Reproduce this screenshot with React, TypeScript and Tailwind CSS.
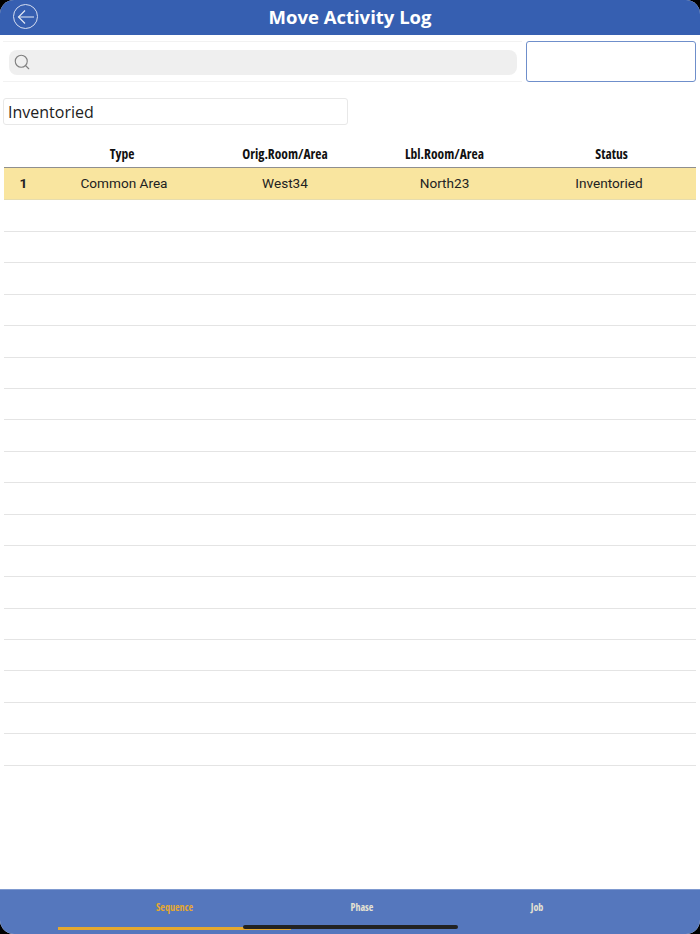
import { Search } from 'lucide-react';

const COLS = 'grid grid-cols-[39px_162px_160px_159px_172px] items-center text-center';

export default function App() {
  return (
    <div className="relative flex h-[934px] w-[700px] flex-col overflow-hidden bg-black font-['Roboto',sans-serif]">
      <div className="flex h-full flex-col overflow-hidden rounded-[14px] bg-white">
        {/* Title bar */}
        <header className="relative flex h-[35px] shrink-0 items-center justify-center bg-[#365fb1]">
          <button className="absolute left-[13px] top-[4px] flex h-[25px] w-[25px] items-center justify-center rounded-full border border-[#d5ddf0]">
            <svg width="18" height="16" viewBox="0 0 18 16" fill="none" stroke="#e6ebf6" strokeWidth="1.1">
              <path d="M17 8H1.5" />
              <path d="M8 1.5 1.5 8 8 14.5" />
            </svg>
          </button>
          <h1 className="-mt-[1px] font-['Open_Sans',sans-serif] text-[18.5px] font-bold leading-none text-white">Move Activity Log</h1>
        </header>

        {/* Search row */}
        <div className="mt-[6px] flex items-stretch pl-[3px] pr-[4px]">
          <div className="flex h-[41px] w-[519px] items-center border-y border-[#f2f2f2] pl-[6px] pr-[5px] pt-[1px]">
            <div className="flex h-[25px] w-full items-center rounded-[8px] bg-[#efefef] pl-[4px] text-[#808080]">
              <Search size={18} strokeWidth={1.5} />
            </div>
          </div>
          <input className="ml-[4px] h-[41px] w-[170px] rounded-[3px] border border-[#6f8fcb] bg-white" />
        </div>

        {/* Status filter */}
        <div className="ml-[3px] mt-[16px] flex h-[27px] w-[345px] items-center rounded-[3px] border border-[#e8e8e8] pl-[4px] font-['Open_Sans',sans-serif] text-[16px] text-[#222] [font-stretch:94%]">
          Inventoried
        </div>

        {/* Table */}
        <div className="ml-[4px] mt-[16px] w-[692px]">
          <div className={`${COLS} h-[27px] border-b border-[#8f8f8f] font-['Open_Sans',sans-serif] text-[13.5px] font-bold text-[#111] [font-stretch:75%]`}>
            <span />
            <span className="pr-[4px]">Type</span>
            <span>Orig.Room/Area</span>
            <span>Lbl.Room/Area</span>
            <span className="pl-[3px]">Status</span>
          </div>
          <div className={`${COLS} h-[32px] border-b border-[#e6dcae] bg-[#f9e59f] text-[13.6px] text-[#222]`}>
            <span className="font-bold">1</span>
            <span>Common Area</span>
            <span>West34</span>
            <span>North23</span>
            <span className="pr-[2px]">Inventoried</span>
          </div>
          <div className="pt-[0.6px]">
            {Array.from({ length: 18 }).map((_, i) => (
              <div key={i} className="h-[31.4px] border-b border-[#e4e4e4]" />
            ))}
          </div>
        </div>

        {/* Bottom tabs */}
        <nav className="mt-auto grid h-[45px] shrink-0 grid-cols-[233px_142px_208px] border-t border-[#7f9ad0] bg-[#5577bd] pl-[58px] font-['Open_Sans',sans-serif] text-[10px] font-bold [font-stretch:75%]">
          <div className="flex flex-col items-center justify-between">
            <span className="mt-[10px] text-[#e5a82e]">Sequence</span>
            <span className="mb-[4px] h-[3px] w-full bg-[#e5a82e]" />
          </div>
          <div className="pt-[10px] text-center text-[#e6e3d2]">Phase</div>
          <div className="pt-[10px] text-center text-[#e6e3d2]">Job</div>
        </nav>
      </div>

      {/* Home indicator */}
      <div className="absolute left-[243px] top-[925px] h-[3.5px] w-[215px] rounded-full bg-[#222]" />
    </div>
  );
}
